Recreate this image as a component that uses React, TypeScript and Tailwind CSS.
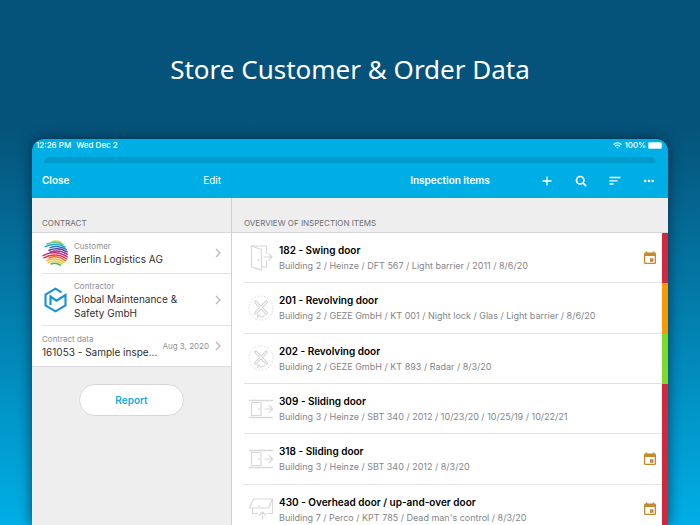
import React from "react";

type DoorKind = "swing" | "revolving" | "sliding" | "overhead";

interface Item {
  title: string;
  details: string;
  kind: DoorKind;
  status: "red" | "orange" | "green";
  due: boolean;
}

const ITEMS: Item[] = [
  { title: "182 - Swing door", details: "Building 2 / Heinze / DFT 567 / Light barrier / 2011 / 8/6/20", kind: "swing", status: "red", due: true },
  { title: "201 - Revolving door", details: "Building 2 / GEZE GmbH / KT 001 / Night lock / Glas / Light barrier / 8/6/20", kind: "revolving", status: "orange", due: false },
  { title: "202 - Revolving door", details: "Building 2 / GEZE GmbH / KT 893 / Radar / 8/3/20", kind: "revolving", status: "green", due: false },
  { title: "309 - Sliding door", details: "Building 3 / Heinze / SBT 340 / 2012 / 10/23/20 / 10/25/19 / 10/22/21", kind: "sliding", status: "red", due: false },
  { title: "318 - Sliding door", details: "Building 3 / Heinze / SBT 340 / 2012 / 8/3/20", kind: "sliding", status: "red", due: true },
  { title: "430 - Overhead door / up-and-over door", details: "Building 7 / Perco / KPT 785 / Dead man's control / 8/3/20", kind: "overhead", status: "red", due: true },
];

const STATUS_COLOR = {
  red: "bg-[#d5273c]",
  orange: "bg-[#ff9800]",
  green: "bg-[#7ddb26]",
};

function DoorIcon({ kind }: { kind: DoorKind }) {
  return (
    <svg viewBox="0 0 26 26" className="size-[26px] shrink-0" fill="none" stroke="#d8d8d8" strokeWidth="1.200" strokeLinejoin="round" strokeLinecap="round" aria-hidden="true">
      {kind === "swing" && (
        <>
          <path d="M3.500 1 L13.500 4.500 V25 L3.500 22 Z" />
          <path d="M3.500 1 H18.500 V8.500 M18.500 16 V22 H13.500" />
          <path d="M16 12 H24 M20.800 8.800 L24 12 L20.800 15.200" />
          <path d="M10.500 14.500 V15.500" />
        </>
      )}
      {kind === "revolving" && (
        <>
          <circle cx="13" cy="13" r="12" strokeWidth="1" strokeDasharray="1.600 1.700" strokeLinecap="butt" />
          <path d="M7.800 7 L18.200 18 M18.200 7 L7.800 18" stroke="#d0d0d0" strokeWidth="3.200" />
          <path d="M7.800 7 L18.200 18 M18.200 7 L7.800 18" stroke="#f6f6f6" strokeWidth="1.300" />
          <path d="M10 20.500 C11.500 22.500 14.500 22.500 16.500 20.500 M9.600 22.500 V20 H12" />
        </>
      )}
      {kind === "sliding" && (
        <>
          <path d="M1.500 4.500 H24.500 M1.500 21.500 H24.500" strokeWidth="1.400" />
          <path d="M3.500 6.500 H13 V19.500 H3.500 Z M10.800 12.500 V13.500" />
          <path d="M17 13 H24.500 M21.300 9.700 L24.600 13 L21.300 16.300" />
        </>
      )}
      {kind === "overhead" && (
        <>
          <path d="M5.500 3 H24.500 L20.500 12 H1.500 Z" />
          <path d="M24.500 3 V17.500 H19 M4.500 12.500 V17.500 H9.500 M10.500 9.800 H11.500" />
          <path d="M14.500 23 V16 M11 19.300 L14.500 15.800 L18 19.300" />
        </>
      )}
    </svg>
  );
}

function StripedGlobe() {
  return (
    <svg viewBox="0 0 26 26" className="size-[26px] shrink-0" fill="none" strokeWidth="1.500" strokeLinecap="round" aria-hidden="true">
      <path d="M10 1.600 C13 .7 16 .9 19 2.300" stroke="#d9cf45" />
      <path d="M5 4 C10 2 16 2 21 4.500" stroke="#5fc089" />
      <path d="M3.500 6.700 C9 3.900 17 3.500 23 7" stroke="#1fa8c9" />
      <path d="M8 7.800 C13 5.700 20 6.300 24.500 9.500" stroke="#2b7fc4" />
      <path d="M7 10.200 C13 7.900 20 8.500 25.200 12" stroke="#51439c" />
      <path d="M8 12.300 C13 10.300 20 10.700 25.500 14.500" stroke="#8d3596" />
      <path d="M1 15.700 C8 11.500 18 11.800 25.300 16.800" stroke="#d92d78" />
      <path d="M2 17.800 C9 13.800 18 14 24.600 19" stroke="#e6334d" />
      <path d="M7 18 C12 15.800 18 16.500 23.600 20.800" stroke="#ee6a35" />
      <path d="M5 20.600 C10 17.800 17 18.600 22 22.400" stroke="#f6b62d" />
      <path d="M6 22.700 C11 20.300 16 20.800 20.300 23.800" stroke="#ecd23c" />
      <path d="M9 24 C12 22.800 15 23 18.500 25.200" stroke="#4fb457" />
    </svg>
  );
}

function HexagonLogo() {
  return (
    <svg viewBox="0 0 26 26" className="size-[26px] shrink-0" fill="none" stroke="#1592d2" strokeWidth="2.100" aria-hidden="true">
      <path d="M19.500 5.300 L13.500 1.700 L3.500 7.500 V18.500 L13.500 24.300 L23.500 18.500 V8 L14.500 13.700 L8.500 9.600 V18" />
    </svg>
  );
}

function Chevron() {
  return (
    <svg viewBox="0 0 6 10" className="h-[10px] w-[6px] shrink-0" fill="none" stroke="#b9b9bb" strokeWidth="1.300" aria-hidden="true">
      <path d="M1 1 L5 5 L1 9" />
    </svg>
  );
}

function CalendarIcon() {
  return (
    <svg viewBox="0 0 12 14" className="h-[14px] w-[12px] shrink-0" role="img" aria-label="Due">
      <path fillRule="evenodd" fill="#c6892d" d="M1.800 .5 H3.300 V1.500 H8.700 V.5 H10.200 V1.500 H10.800 Q12 1.500 12 2.700 V11.800 Q12 13 10.800 13 H1.200 Q0 13 0 11.800 V2.700 Q0 1.500 1.200 1.500 H1.800 Z M1.300 5 V11.700 H10.700 V5 Z" />
      <rect x="6" y="7.300" width="3.500" height="3.500" fill="#c6892d" />
    </svg>
  );
}

function StatusBar() {
  return (
    <div className="flex h-[18px] shrink-0 items-start justify-between px-1 pt-px text-[8px] leading-[10px] font-medium text-white">
      <div className="flex gap-[5px]">
        <span>12:26 PM</span>
        <span>Wed Dec 2</span>
      </div>
      <div className="flex items-center gap-[2px]">
        <svg viewBox="0 0 9 7" className="h-[7px] w-[9px]" fill="none" stroke="white" strokeWidth="1.200" aria-hidden="true">
          <path d="M.5 2.600 C2.800 .4 6.200 .4 8.500 2.600 M2.200 4.300 C3.500 3.100 5.500 3.100 6.800 4.300" />
          <path d="M3.300 5.300 Q4.500 4.500 5.700 5.300 L4.500 6.600 Z" fill="white" stroke="none" />
        </svg>
        <span>100%</span>
        <svg viewBox="0 0 16 7" className="h-[7px] w-[16px]" fill="white" aria-hidden="true">
          <rect x="0" y="0" width="14" height="7" rx="1.600" opacity=".6" />
          <rect x=".8" y=".8" width="12.400" height="5.400" rx="1" />
          <path d="M14.700 2.300 Q16 3.500 14.700 4.700 Z" opacity=".6" />
        </svg>
      </div>
    </div>
  );
}

function SideNav() {
  return (
    <nav className="flex h-[35px] items-center justify-between border-r border-[#1f9fc9] px-[10px] text-[10px] text-white">
      <button type="button" className="font-semibold">Close</button>
      <button type="button">Edit</button>
    </nav>
  );
}

function MainNav() {
  return (
    <nav className="grid h-[35px] grid-cols-[1fr_auto_1fr] items-center text-white">
      <span />
      <h2 className="text-[10px] font-semibold">Inspection items</h2>
      <div className="flex items-center justify-end gap-[22px] pr-[13px]">
        <button type="button" aria-label="Add">
          <svg viewBox="0 0 12 12" className="size-3" fill="none" stroke="white" strokeWidth="1.300">
            <path d="M6 1.500 V10.500 M1.500 6 H10.500" />
          </svg>
        </button>
        <button type="button" aria-label="Search">
          <svg viewBox="0 0 12 12" className="size-3" fill="none" stroke="white" strokeWidth="1.700">
            <circle cx="5.200" cy="5.200" r="3.700" />
            <path d="M7.900 7.900 L11.200 11.200" />
          </svg>
        </button>
        <button type="button" aria-label="Sort">
          <svg viewBox="0 0 12 12" className="size-3" fill="none" stroke="white" strokeWidth="1.300">
            <path d="M.5 2.500 H11.500 M.5 5.800 H8.500 M.5 9 H4.500" />
          </svg>
        </button>
        <button type="button" aria-label="More">
          <svg viewBox="0 0 12 12" className="size-3" fill="white">
            <circle cx="2.200" cy="6" r="1.300" />
            <circle cx="6" cy="6" r="1.300" />
            <circle cx="9.800" cy="6" r="1.300" />
          </svg>
        </button>
      </div>
    </nav>
  );
}

function SectionTitle({ children, className }: { children: React.ReactNode; className: string }) {
  return (
    <h3 className={`flex h-[35px] items-end border-b border-[#d8d8da] bg-[#eeeeee] pb-[3px] text-[8px] leading-[12px] text-[#6d6d72] ${className}`}>
      {children}
    </h3>
  );
}

function Sidebar() {
  return (
    <aside className="flex flex-col border-r border-[#d0d0d2] bg-[#eeeeee]">
      <SectionTitle className="pl-[10px]">CONTRACT</SectionTitle>
      <ul className="border-b border-[#dcdcde] bg-white pl-[10px] text-[#303032]">
        <li className="flex h-[41px] items-center gap-[6px] border-b border-[#e2e2e4] pr-[10px]">
          <StripedGlobe />
          <div className="min-w-0 flex-1">
            <p className="text-[8px] leading-[12px] text-[#8e8e93]">Customer</p>
            <p className="text-[10px] leading-[14px]">Berlin Logistics AG</p>
          </div>
          <Chevron />
        </li>
        <li className="flex h-[52px] items-center gap-[6px] border-b border-[#e2e2e4] pr-[10px]">
          <HexagonLogo />
          <div className="min-w-0 flex-1">
            <p className="text-[8px] leading-[12px] text-[#8e8e93]">Contractor</p>
            <p className="text-[10px] leading-[14px]">Global Maintenance &amp; Safety GmbH</p>
          </div>
          <Chevron />
        </li>
        <li className="flex h-[40px] items-center gap-[6px] pr-[10px]">
          <div className="min-w-0 flex-1">
            <p className="text-[8px] leading-[12px] text-[#8e8e93]">Contract data</p>
            <p className="text-[10px] leading-[14px] whitespace-nowrap">161053 - Sample inspe...</p>
          </div>
          <span className="text-[8px] text-[#8e8e93]">Aug 3, 2020</span>
          <Chevron />
        </li>
      </ul>
      <button type="button" className="mx-auto mt-[17px] h-8 w-[105px] rounded-full border border-[#d8d8da] bg-white text-[10px] font-semibold text-[#12aedd]">
        Report
      </button>
    </aside>
  );
}

function ItemRow({ item }: { item: Item }) {
  return (
    <li className="flex pl-3">
      <div className="flex min-w-0 flex-1 items-center border-b border-[#e2e2e4] pr-[6px] pl-[4px]">
        <DoorIcon kind={item.kind} />
        <div className="min-w-0 flex-1 pt-px pl-[5px]">
          <p className="text-[10px] leading-[15px] font-semibold text-black">{item.title}</p>
          <p className="text-[9px] leading-[15px] text-[#858589]">{item.details}</p>
        </div>
        {item.due && <CalendarIcon />}
      </div>
      <div className={`w-[6px] ${STATUS_COLOR[item.status]}`} />
    </li>
  );
}

export default function App() {
  return (
    <div className="flex h-screen flex-col overflow-hidden bg-[linear-gradient(to_bottom,#05537a_0%,#05537a_24%,#00afe6_100%)] font-['Inter','Liberation_Sans',sans-serif]">
      <h1 className="pt-[50px] text-center font-['Noto_Sans','Open_Sans',sans-serif] text-[26px] leading-[38px] text-white">
        Store Customer &amp; Order Data
      </h1>
      <main className="mx-8 mt-[51px] flex flex-1 flex-col overflow-hidden rounded-t-[12px] bg-[#00aee6] shadow-[0_0_14px_rgba(0,20,40,0.65)]">
        <StatusBar />
        <div className="mx-3 h-[6px] shrink-0 rounded-t-[6px] bg-[#009bcb]" />
        <div className="grid flex-1 grid-cols-[200px_1fr] grid-rows-[auto_1fr]">
          <SideNav />
          <MainNav />
          <Sidebar />
          <section className="bg-white">
            <SectionTitle className="pl-3">OVERVIEW OF INSPECTION ITEMS</SectionTitle>
            <ul className="grid h-[302px] grid-rows-6">
              {ITEMS.map((item) => (
                <ItemRow key={item.title} item={item} />
              ))}
            </ul>
          </section>
        </div>
      </main>
    </div>
  );
}
